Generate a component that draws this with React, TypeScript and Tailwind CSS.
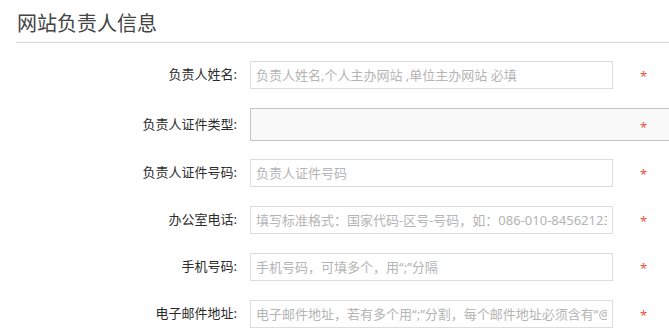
import React from 'react';

interface Field {
  label: string;
  placeholder: string;
}

const fields: Field[] = [
  { label: '负责人姓名:', placeholder: '负责人姓名,个人主办网站 ,单位主办网站 必填' },
  { label: '负责人证件号码:', placeholder: '负责人证件号码' },
  { label: '办公室电话:', placeholder: '填写标准格式：国家代码-区号-号码，如：086-010-84562123' },
  { label: '手机号码:', placeholder: '手机号码，可填多个，用“;”分隔' },
  { label: '电子邮件地址:', placeholder: '电子邮件地址，若有多个用“;”分割，每个邮件地址必须含有“@”' },
];

// latin glyphs (digits, quotes) come from Noto Sans so they stay narrow like the original
const font = { fontFamily: '"Noto Sans", "Noto Sans CJK SC", sans-serif' };

function Star() {
  return <span className="text-[13px] leading-none text-[#e8523f]">*</span>;
}

function InputRow({ label, placeholder }: Field) {
  return (
    <div className="flex items-center mb-[19px]">
      <label className="w-[237px] shrink-0 text-right text-[13px] text-[#2b2b2b]">{label}</label>
      <input
        type="text"
        placeholder={placeholder}
        className="ml-[13px] w-[363px] h-[28px] shrink-0 border border-[#dcdcdc] bg-white px-[5px] text-[13px] text-[#333] outline-none placeholder:text-[#b4b4b4]"
        style={font}
      />
      <span className="ml-[27px] pt-[3px] flex items-center">
        <Star />
      </span>
    </div>
  );
}

export default function App() {
  return (
    <div className="w-[669px] h-[332px] overflow-hidden bg-white" style={font}>
      {/* Section header */}
      <div className="ml-[16px] pt-[10px] pb-[4px] border-b border-[#d6d6d6]">
        <h2 className="pl-[1px] text-[20px] leading-[28px] font-normal text-[#444]">网站负责人信息</h2>
      </div>

      <div className="mt-[18px]">
        <InputRow {...fields[0]} />

        {/* Certificate type select */}
        <div className="relative flex items-center mb-[18px]">
          <label className="w-[237px] shrink-0 text-right text-[13px] text-[#2b2b2b]">负责人证件类型:</label>
          <div className="ml-[13px] w-[460px] h-[33px] shrink-0 border border-[#c4c4c4] bg-[#f9f9f9]" />
          <span className="absolute left-[640px] top-[13px] flex items-center">
            <Star />
          </span>
        </div>

        {fields.slice(1).map((f) => (
          <InputRow key={f.label} {...f} />
        ))}
      </div>
    </div>
  );
}
